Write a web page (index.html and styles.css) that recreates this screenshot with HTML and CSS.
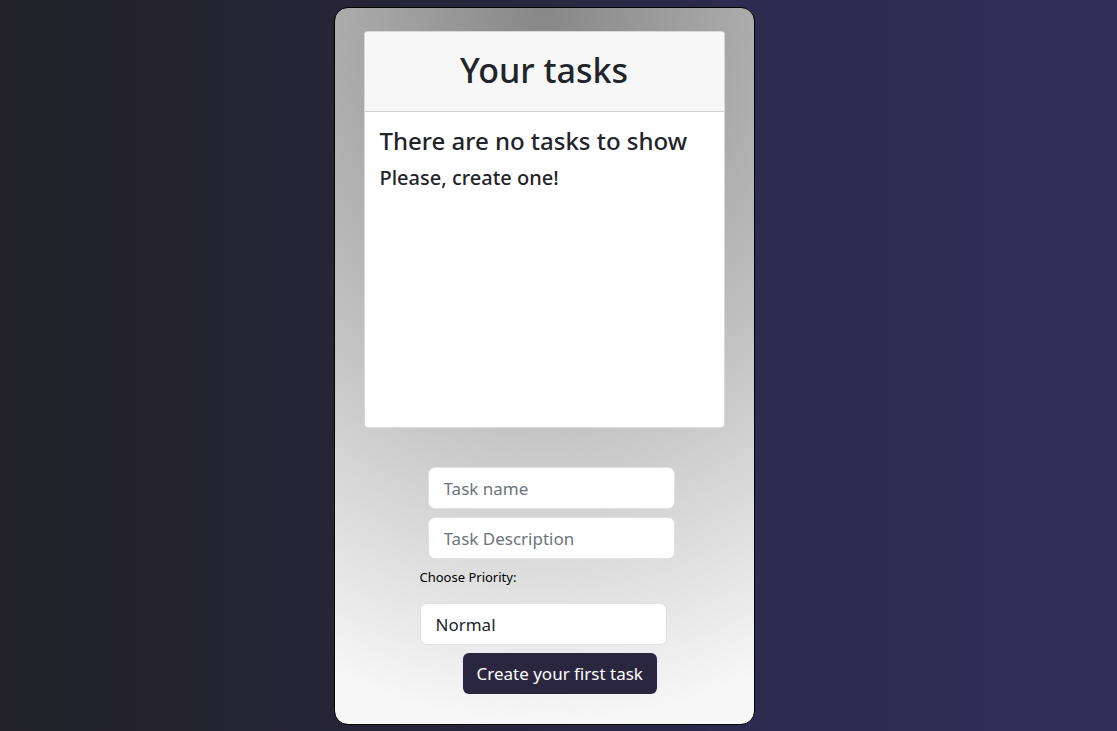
FILE: index.html
```html
<!DOCTYPE html>
<html lang="en">
<head>
<meta charset="utf-8">
<title>Your tasks</title>
<link rel="stylesheet" href="styles.css">
</head>
<body>
<main class="app">
  <section class="tasks-card">
    <header class="tasks-header"><h1>Your tasks</h1></header>
    <div class="tasks-body">
      <h4>There are no tasks to show</h4>
      <h5>Please, create one!</h5>
    </div>
  </section>
  <form class="task-form">
    <input class="field field-indent" type="text" placeholder="Task name">
    <input class="field field-indent" type="text" placeholder="Task Description">
    <label class="prio-label" for="prio">Choose Priority:</label>
    <select id="prio" class="field select">
      <option>Normal</option>
      <option>High</option>
      <option>Low</option>
    </select>
    <button type="button" class="submit">Create your first task</button>
  </form>
</main>
</body>
</html>
```
FILE: styles.css
```css
* { box-sizing: border-box; }
html, body { height: 100%; }
body {
  margin: 0;
  background: linear-gradient(to right, #222228 0%, #27253a 40%, #2e2c55 75%, #312d5a 100%);
  font-family: "Noto Sans", "Open Sans", sans-serif;
  color: #212529;
  display: flex;
  justify-content: center;
}
.app {
  margin-top: 7px;
  margin-right: 29px;
  width: 421px;
  height: 718px;
  border: 1px solid #000;
  border-radius: 14px;
  background: radial-gradient(ellipse 140% 100% at 50% 0%, #878787 0%, #c0c0c0 55%, #f7f7f7 100%);
  padding: 23px 29px 0 29px;
  display: flex;
  flex-direction: column;
}
.tasks-card {
  width: 361px;
  height: 397px;
  background: #fff;
  border: 1px solid rgba(0,0,0,.15);
  border-radius: 4px;
  overflow: hidden;
  flex-shrink: 0;
}
.tasks-header {
  height: 80px;
  padding-bottom: 3px;
  background: #f7f7f7;
  border-bottom: 1px solid #cfcfcf;
  display: flex;
  align-items: center;
  justify-content: center;
}
.tasks-header h1 {
  margin: 0;
  font-size: 34px;
  font-weight: 500;
  line-height: 1.2;
}
.tasks-body { padding: 15px 15px; }
.tasks-body h4 {
  margin: 0 0 10px;
  font-size: 24px;
  font-weight: 500;
  line-height: 1.2;
}
.tasks-body h5 {
  margin: 0;
  font-size: 20px;
  font-weight: 500;
  line-height: 1.2;
}
.task-form {
  margin-top: 39px;
  margin-left: 56px;
  width: 262px;
  display: flex;
  flex-direction: column;
  align-items: flex-start;
}
.field {
  width: 247px;
  height: 42px;
  border: 1px solid #dee2e6;
  border-radius: 7px;
  background: #fff;
  font-family: inherit;
  font-size: 17px;
  padding: 1px 15px 0;
  color: #212529;
  outline: none;
}
.field::placeholder { color: #6c757d; }
.field-indent { margin-left: 8px; margin-bottom: 8px; }
.prio-label {
  margin-top: 1px;
  font-size: 13px;
  color: #000;
  line-height: 18px;
}
.select {
  margin-top: 17px;
  -webkit-appearance: none;
  appearance: none;
  width: 247px;
}
.submit {
  margin-top: 8px;
  margin-left: 43px;
  height: 41px;
  padding: 0 14px;
  border: none;
  border-radius: 6px;
  background: #2a2640;
  color: #fff;
  font-family: inherit;
  font-size: 17px;
}
```
